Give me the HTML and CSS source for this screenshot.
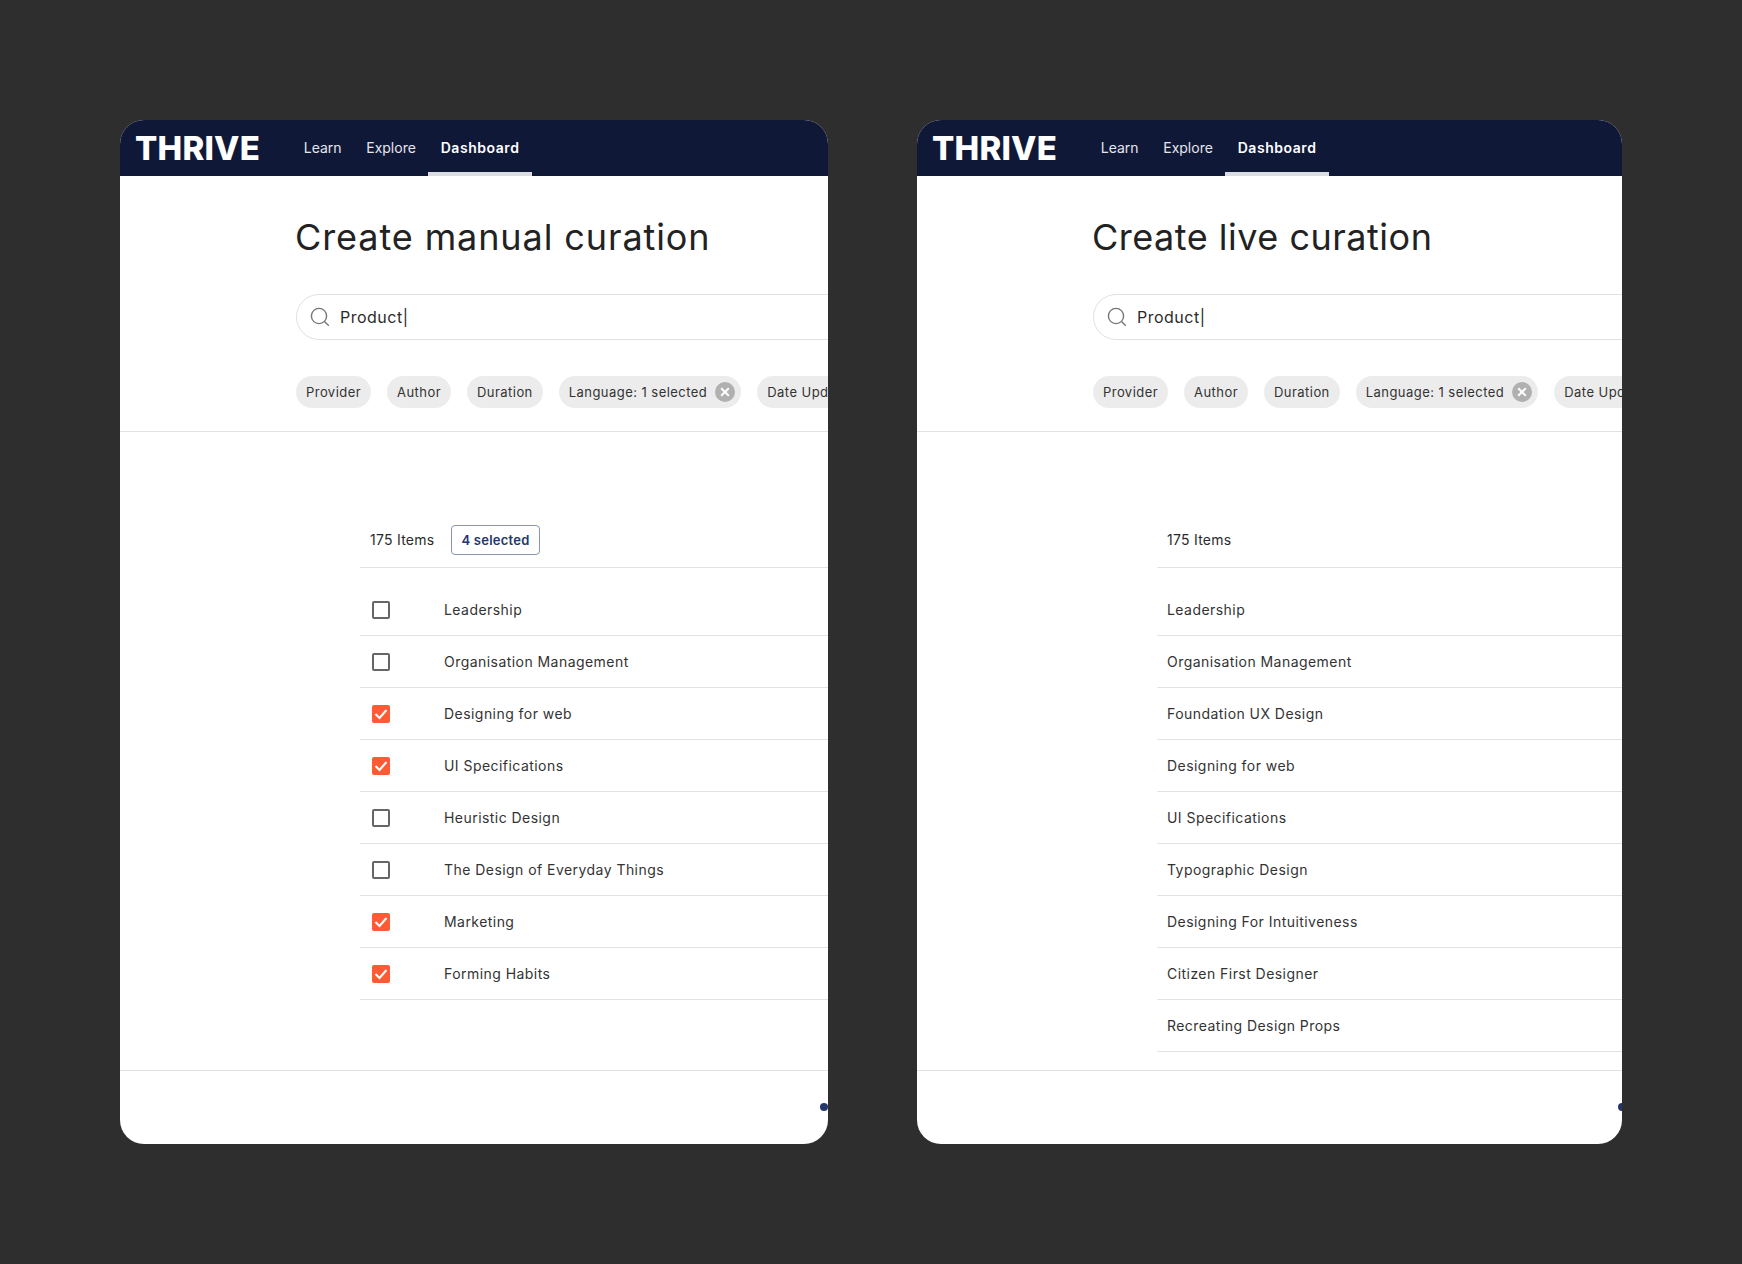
FILE: index.html
```html
<!DOCTYPE html>
<html lang="en">
<head>
    <meta charset="UTF-8">
    <title>Curation screens</title>
    <link rel="stylesheet" href="styles.css">
</head>
<body>
    <div class="card card-manual">
        <nav class="nav">
            <span class="logo">THRIVE</span>
            <a class="nav-link">Learn</a>
            <a class="nav-link">Explore</a>
            <a class="nav-link active">Dashboard</a>
        </nav>
        <header class="head">
            <h1>Create manual curation</h1>
            <div class="search">
                <svg class="search-icon" width="20" height="20" viewBox="0 0 20 20" fill="none" stroke="#777" stroke-width="1.4"><circle cx="9" cy="9" r="7.6"/><path d="M14.5 14.5 18.8 18.8"/></svg>
                <span>Product|</span>
            </div>
            <div class="chips">
                <span class="chip">Provider</span>
                <span class="chip">Author</span>
                <span class="chip">Duration</span>
                <span class="chip chip-on">Language: 1 selected
                    <svg class="chip-x" width="20" height="20" viewBox="0 0 20 20"><circle cx="10" cy="10" r="10" fill="#b0b0b0"/><path d="M6.2 6.2 13.8 13.8M13.8 6.2 6.2 13.8" stroke="#fff" stroke-width="2"/></svg>
                </span>
                <span class="chip">Date Updated</span>
            </div>
        </header>
        <section class="content">
            <div class="toolbar">
                <span class="count">175 Items</span>
                <span class="selected">4 selected</span>
            </div>
            <ul class="rows">
                <li class="row"><span class="box"></span>Leadership</li>
                <li class="row"><span class="box"></span>Organisation Management</li>
                <li class="row"><span class="box on"><svg width="18" height="18" viewBox="0 0 18 18" fill="none"><path d="M3.5 9 7.5 13 14.5 5" stroke="#fff" stroke-width="2"/></svg></span>Designing for web</li>
                <li class="row"><span class="box on"><svg width="18" height="18" viewBox="0 0 18 18" fill="none"><path d="M3.5 9 7.5 13 14.5 5" stroke="#fff" stroke-width="2"/></svg></span>UI Specifications</li>
                <li class="row"><span class="box"></span>Heuristic Design</li>
                <li class="row"><span class="box"></span>The Design of Everyday Things</li>
                <li class="row"><span class="box on"><svg width="18" height="18" viewBox="0 0 18 18" fill="none"><path d="M3.5 9 7.5 13 14.5 5" stroke="#fff" stroke-width="2"/></svg></span>Marketing</li>
                <li class="row"><span class="box on"><svg width="18" height="18" viewBox="0 0 18 18" fill="none"><path d="M3.5 9 7.5 13 14.5 5" stroke="#fff" stroke-width="2"/></svg></span>Forming Habits</li>
            </ul>
        </section>
        <footer class="foot"><span class="dot"></span></footer>
    </div>

    <div class="card card-live">
        <nav class="nav">
            <span class="logo">THRIVE</span>
            <a class="nav-link">Learn</a>
            <a class="nav-link">Explore</a>
            <a class="nav-link active">Dashboard</a>
        </nav>
        <header class="head">
            <h1>Create live curation</h1>
            <div class="search">
                <svg class="search-icon" width="20" height="20" viewBox="0 0 20 20" fill="none" stroke="#777" stroke-width="1.4"><circle cx="9" cy="9" r="7.6"/><path d="M14.5 14.5 18.8 18.8"/></svg>
                <span>Product|</span>
            </div>
            <div class="chips">
                <span class="chip">Provider</span>
                <span class="chip">Author</span>
                <span class="chip">Duration</span>
                <span class="chip chip-on">Language: 1 selected
                    <svg class="chip-x" width="20" height="20" viewBox="0 0 20 20"><circle cx="10" cy="10" r="10" fill="#b0b0b0"/><path d="M6.2 6.2 13.8 13.8M13.8 6.2 6.2 13.8" stroke="#fff" stroke-width="2"/></svg>
                </span>
                <span class="chip">Date Updated</span>
            </div>
        </header>
        <section class="content">
            <div class="toolbar">
                <span class="count">175 Items</span>
            </div>
            <ul class="rows">
                <li class="row">Leadership</li>
                <li class="row">Organisation Management</li>
                <li class="row">Foundation UX Design</li>
                <li class="row">Designing for web</li>
                <li class="row">UI Specifications</li>
                <li class="row">Typographic Design</li>
                <li class="row">Designing For Intuitiveness</li>
                <li class="row">Citizen First Designer</li>
                <li class="row">Recreating Design Props</li>
            </ul>
        </section>
        <footer class="foot"><span class="dot"></span></footer>
    </div>
</body>
</html>
```

FILE: styles.css
```css
* { box-sizing: border-box; }
html, body { margin: 0; height: 100%; }
body {
    display: flex;
    gap: 89px;
    padding: 120px 0 0 120px;
    background: #2e2e2e;
    font-family: Inter, "Liberation Sans", sans-serif;
    color: #2b2b2b;
    overflow: hidden;
}
.card {
    display: flex;
    flex-direction: column;
    height: 1024px;
    background: #fff;
    border-radius: 24px;
    overflow: hidden;
}
.card-manual { width: 708px; }
.card-live { width: 705px; }

.nav {
    display: flex;
    align-items: center;
    height: 56px;
    padding-left: 15px;
    background: #101838;
    color: #fff;
}
.logo {
    width: 156.5px;
    font-size: 33px;
    font-weight: 800;
    letter-spacing: 0.2px;
}
.nav-link {
    display: flex;
    align-items: center;
    height: 56px;
    padding: 0 12.3px 2px;
    font-size: 14px;
    color: #e4e6ec;
}
.nav-link.active {
    padding: 2px 12.5px 0;
    font-weight: 600;
    letter-spacing: 0.55px;
    color: #fff;
    border-bottom: 4px solid #dcdde2;
}

.head {
    padding: 35px 0 23px 175px;
    border-bottom: 1px solid #e2e2e2;
}
h1 {
    margin: 0;
    font-size: 36px;
    font-weight: 400;
    line-height: 52px;
    color: #222;
    white-space: nowrap;
}
.card-manual h1 { letter-spacing: 0.9px; }
.card-live h1 { letter-spacing: 0.5px; }
.search {
    display: flex;
    align-items: center;
    gap: 10px;
    width: 800px;
    height: 46px;
    margin: 31px 0 0 1px;
    padding-left: 13px;
    border: 1px solid #e0e0e0;
    border-radius: 23px;
    font-size: 16px;
    letter-spacing: 0.5px;
}
.chips {
    display: flex;
    gap: 16px;
    margin: 36px 0 0 1px;
    white-space: nowrap;
}
.chip {
    display: flex;
    align-items: center;
    flex-shrink: 0;
    height: 32px;
    padding: 0 10px;
    border-radius: 16px;
    background: #ececec;
    font-size: 13px;
    letter-spacing: 0.45px;
    color: #333;
}
.chip-on { padding-right: 6px; gap: 8px; }

.content {
    flex: 1;
    margin: 84px 0 0 240px;
}
.toolbar {
    display: flex;
    align-items: center;
    gap: 17px;
    height: 52px;
    padding: 0 0 4px 10px;
    border-bottom: 1px solid #e2e2e2;
    font-size: 14px;
    letter-spacing: 0.25px;
}
.count { color: #2b2b2b; }
.selected {
    display: flex;
    align-items: center;
    height: 30px;
    padding: 0 9px;
    border: 1px solid #8a94ad;
    border-radius: 4px;
    font-size: 13px;
    font-weight: 600;
    color: #24366b;
}
.rows {
    margin: 16px 0 0;
    padding: 0;
    list-style: none;
}
.row {
    display: flex;
    align-items: center;
    height: 52px;
    padding-left: 10px;
    border-bottom: 1px solid #e2e2e2;
    font-size: 14px;
    letter-spacing: 0.45px;
    color: #333;
}
.box {
    width: 18px;
    height: 18px;
    margin: 0 54px 0 2px;
    border: 2px solid #666;
    border-radius: 2px;
}
.box.on {
    border: 0;
    background: #fe5a35;
}
.box svg { display: block; }

.foot {
    display: flex;
    align-items: center;
    justify-content: flex-end;
    height: 74px;
    padding-bottom: 1px;
    border-top: 1px solid #e2e2e2;
}
.dot {
    width: 8px;
    height: 8px;
    margin-right: -4px;
    border-radius: 50%;
    background: #24366b;
}
.card-manual .dot { margin-right: 0; }
```
